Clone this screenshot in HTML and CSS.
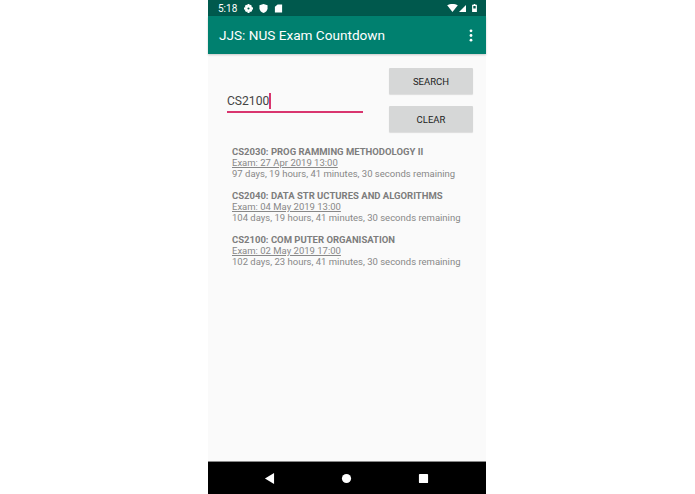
FILE: index.html
```html
<!DOCTYPE html>
<html>
<head>
    <title>JJS: NUS Exam Countdown</title>
    <link rel="stylesheet" href="styles.css">
</head>
<body>
    <div class="phone">
        <div class="status-bar">
            <span class="clock">5:18</span>
            <svg class="status-icon" viewBox="0 0 10 10"><path fill="#fff" fill-rule="evenodd" d="M4 0h2l.3 1.4 1-.5 1.500 1.400-.6 1.100 1.800.6v2l-1.400.4.500 1.100-1.400 1.500-1.200-.6L6 10H4l-.4-1.600-1.200.6L1 7.500l.6-1.100L0 6V4l1.600-.5L1 2.300 2.300.9l1.300.6zM5 3.800a1.200 1.200 0 1 0 0 2.400 1.200 1.200 0 0 0 0-2.400z"/></svg>
            <svg class="status-icon" viewBox="0 0 10 10"><path fill="#fff" d="M5 0l4.500 1.500v3.200C9.500 7.200 7.500 9.200 5 10 2.500 9.200.5 7.200.5 4.700V1.500z"/></svg>
            <svg class="status-icon" viewBox="0 0 10 10"><path fill="#fff" d="M4 .5h5V9.500H1V3z"/></svg>
            <span class="status-spacer"></span>
            <svg class="wifi" viewBox="0 0 12 9"><path fill="#fff" d="M0 1.500C3.500-.5 8.500-.5 12 1.500L6 9z"/></svg>
            <svg class="signal" viewBox="0 0 9 9"><path fill="#fff" d="M9 0v9H0z"/></svg>
            <svg class="battery" viewBox="0 0 6 10"><path fill="#fff" fill-rule="evenodd" d="M2 0h2v1h2v9H0V1h2zM1.500 2.500v3h3v-3z"/></svg>
        </div>
        <div class="app-bar">
            <span class="app-title">JJS: NUS Exam Countdown</span>
            <svg class="overflow-menu" viewBox="0 0 4 14"><circle cx="2" cy="2" r="1.500"/><circle cx="2" cy="7" r="1.500"/><circle cx="2" cy="12" r="1.500"/></svg>
        </div>
        <div class="content">
            <div class="search-row">
                <div class="search-field"><span class="search-text">CS2100</span><span class="caret"></span></div>
                <div class="search-buttons">
                    <div class="button">SEARCH</div>
                    <div class="button">CLEAR</div>
                </div>
            </div>
            <div class="results">
                <div class="result">
                    <div class="result-name">CS2030: PROG RAMMING METHODOLOGY II</div>
                    <div class="result-date">Exam: 27 Apr 2019 13:00</div>
                    <div>97 days, 19 hours, 41 minutes, 30 seconds remaining</div>
                </div>
                <div class="result">
                    <div class="result-name">CS2040: DATA STR UCTURES AND ALGORITHMS</div>
                    <div class="result-date">Exam: 04 May 2019 13:00</div>
                    <div>104 days, 19 hours, 41 minutes, 30 seconds remaining</div>
                </div>
                <div class="result">
                    <div class="result-name">CS2100: COM PUTER ORGANISATION</div>
                    <div class="result-date">Exam: 02 May 2019 17:00</div>
                    <div>102 days, 23 hours, 41 minutes, 30 seconds remaining</div>
                </div>
            </div>
        </div>
        <div class="nav-bar">
            <svg class="nav-icon" viewBox="0 0 12 12"><path fill="#fff" d="M11 0v12L1 6z"/></svg>
            <svg class="nav-icon" viewBox="0 0 12 12"><circle fill="#fff" cx="6" cy="6" r="5"/></svg>
            <svg class="nav-icon" viewBox="0 0 12 12"><rect fill="#fff" x="1" y="1" width="10" height="10" rx="1"/></svg>
        </div>
    </div>
</body>
</html>
```
FILE: styles.css
```css
body {
    margin: 0;
    background: white;
    font-family: Roboto, "Liberation Sans", sans-serif;
}

.phone {
    width: 278px;
    height: 494px;
    margin-left: 208px;
    display: flex;
    flex-direction: column;
    background: #fafafa;
}

.status-bar {
    height: 16px;
    flex: none;
    display: flex;
    align-items: center;
    padding: 0 9px 0 10px;
    background: #00594d;
    color: white;
    font-size: 10px;
}

.clock {
    margin-right: 7px;
}

.status-icon {
    width: 9px;
    height: 9px;
    margin-right: 6px;
}

.status-spacer {
    flex: 1;
}

.wifi {
    width: 11px;
    height: 8px;
    margin-right: 1px;
}

.signal {
    width: 7px;
    height: 7px;
    margin-right: 6px;
}

.battery {
    width: 5px;
    height: 8px;
}

.app-bar {
    height: 38px;
    flex: none;
    display: flex;
    align-items: center;
    justify-content: space-between;
    padding: 0 13px 0 11px;
    box-sizing: border-box;
    background: #00806f;
    color: white;
    box-shadow: 0 1px 2px rgba(0, 0, 0, 0.2);
}

.app-title {
    font-size: 13.6px;
}

.overflow-menu {
    width: 4px;
    height: 13px;
    fill: white;
}

.content {
    flex: 1;
}

.search-row {
    display: flex;
    justify-content: space-between;
    padding: 14px 13px 0 19px;
}

.search-field {
    width: 136px;
    height: 45px;
    padding-bottom: 2px;
    box-sizing: border-box;
    display: flex;
    align-items: flex-end;
    border-bottom: 2px solid #d9356f;
    font-size: 12.1px;
    line-height: 16px;
    color: #444;
}

.caret {
    width: 1.5px;
    height: 16px;
    background: #d9356f;
}

.search-buttons {
    display: flex;
    flex-direction: column;
    gap: 12px;
}

.button {
    width: 84px;
    height: 26px;
    display: flex;
    align-items: center;
    justify-content: center;
    background: #d6d7d7;
    border-radius: 1px;
    box-shadow: 0 1px 1px rgba(0, 0, 0, 0.12);
    font-size: 9.5px;
    color: #222;
}

.results {
    padding: 14px 0 0 24px;
    font-size: 9.5px;
    line-height: 11px;
    color: #888;
}

.result {
    margin-bottom: 11px;
}

.result-name {
    font-weight: 700;
    color: #7d7d7d;
}

.result-date {
    text-decoration: underline;
}

.nav-bar {
    height: 32px;
    flex: none;
    display: flex;
    align-items: center;
    justify-content: center;
    gap: 66px;
    padding-right: 2px;
    background: black;
    border-top: 1px solid #888;
}

.nav-icon {
    width: 11px;
    height: 11px;
}
```
